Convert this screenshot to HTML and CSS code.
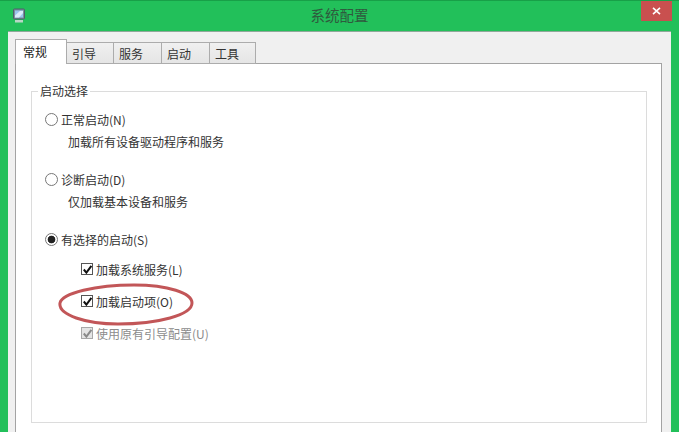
FILE: index.html
```html
<!DOCTYPE html>
<html lang="zh">
<head>
<meta charset="utf-8">
<title>系统配置</title>
<link rel="stylesheet" href="styles.css">
</head>
<body>
<div class="window">
  <header class="titlebar">
    <svg class="app-icon" width="15" height="16" viewBox="0 0 15 16">
      <rect x="1.500" y="1" width="11" height="10" rx="1" fill="#7d8f9c" stroke="#4d5f6b"/>
      <rect x="3" y="2.500" width="8" height="7" fill="#9cc4ee"/>
      <path d="M3 7.500 8 3h3v2L7 9.500H3z" fill="#dcecfb"/>
      <rect x="3" y="12" width="8" height="2.500" fill="#b9d6c6"/>
    </svg>
    <div class="title">系统配置</div>
    <button class="close" type="button" aria-label="关闭">
      <svg width="9" height="8" viewBox="0 0 9 8"><path d="M1 .8 8 7.200M8 .8 1 7.200" stroke="#fff" stroke-width="1.600"/></svg>
    </button>
  </header>
  <div class="client">
    <nav class="tabs">
      <div class="tab active w51">常规</div>
      <div class="tab w47">引导</div>
      <div class="tab w48">服务</div>
      <div class="tab w48">启动</div>
      <div class="tab w46">工具</div>
    </nav>
    <main class="pane">
      <fieldset class="group">
        <legend class="legend">启动选择</legend>
        <div class="group-body">
          <label class="row radio-row first"><span class="radio"></span>正常启动(N)</label>
          <p class="desc">加载所有设备驱动程序和服务</p>
          <label class="row radio-row gap"><span class="radio"></span>诊断启动(D)</label>
          <p class="desc">仅加载基本设备和服务</p>
          <label class="row radio-row gap"><span class="radio on"></span>有选择的启动(S)</label>
          <label class="row check-row sub1">
            <span class="check"><svg width="11" height="11" viewBox="0 0 11 11"><path d="M1.800 5.500 4.400 8.600 9.400 1.800" fill="none" stroke="#111" stroke-width="2"/></svg></span>加载系统服务(L)
          </label>
          <label class="row check-row sub2">
            <span class="check"><svg width="11" height="11" viewBox="0 0 11 11"><path d="M1.800 5.500 4.400 8.600 9.400 1.800" fill="none" stroke="#111" stroke-width="2"/></svg></span>加载启动项(O)
            <svg class="ring" width="136" height="44" viewBox="0 0 136 44"><path d="M2 20C4 10 38 2 76 2c34 0 58 8 58 18 0 12-34 21-74 21C28 41 0 32 2 20Z" fill="none" stroke="#c25658" stroke-width="3"/></svg>
          </label>
          <label class="row check-row sub2 disabled">
            <span class="check"><svg width="11" height="11" viewBox="0 0 11 11"><path d="M1.800 5.500 4.400 8.600 9.400 1.800" fill="none" stroke="#8a8a8a" stroke-width="2"/></svg></span>使用原有引导配置(U)
          </label>
        </div>
      </fieldset>
    </main>
  </div>
</div>
</body>
</html>
```

FILE: styles.css
```css
* { box-sizing: border-box; }
html, body { margin: 0; padding: 0; }
body {
  width: 679px;
  height: 432px;
  overflow: hidden;
  font-family: "Noto Sans CJK SC", "Liberation Sans", sans-serif;
  font-size: 12px;
  color: #333;
}
.window {
  height: 432px;
  display: flex;
  flex-direction: column;
  background: #22c05a;
  border-top: 1px solid #18a048;
  padding: 0 8px;
  overflow: hidden;
}
.titlebar {
  flex: none;
  height: 30px;
  position: relative;
  display: flex;
  align-items: flex-start;
  justify-content: center;
}
.app-icon { position: absolute; left: 4px; top: 7px; }
.title {
  font-size: 14.500px;
  line-height: 28px;
  color: #2f5a3e;
}
.close {
  position: absolute;
  right: -1px;
  top: 0;
  width: 31px;
  height: 20px;
  padding: 0;
  border: 0;
  background: #c9504f;
  display: flex;
  align-items: center;
  justify-content: center;
}
.client {
  flex: 1;
  min-height: 0;
  background: #f0f0f0;
  border-top: 1px solid #8fa89a;
  padding: 8px 9px 0 7px;
  display: flex;
  flex-direction: column;
}
.tabs {
  flex: none;
  display: flex;
  align-items: flex-end;
  height: 24px;
  position: relative;
  z-index: 1;
  margin-bottom: -1px;
}
.tab {
  height: 22px;
  border: 1px solid #acacac;
  border-left: 0;
  background: linear-gradient(#f0f0f0, #e5e5e5);
  padding-left: 5px;
  line-height: 21px;
  color: #333;
}
.tab.w46 { width: 46px; }
.tab.w47 { width: 47px; }
.tab.w48 { width: 48px; }
.tab.w51 { width: 52px; }
.tab.active {
  height: 25px;
  background: #fff;
  border-left: 1px solid #acacac;
  border-bottom: 0;
  padding-left: 7px;
  line-height: 23px;
  color: #222;
}
.pane {
  flex: 1;
  min-height: 0;
  background: #fff;
  border: 1px solid #a3a3a3;
  border-bottom: 0;
  padding: 18px 14px 0 15px;
}
.group {
  margin: 0;
  height: 341px;
  border: 1px solid #dcdcdc;
  padding: 0;
  min-width: 0;
}
.legend {
  margin-left: 6px;
  padding: 0 2px;
  line-height: 18px;
  color: #333;
}
.group-body { padding-left: 13px; }
.row {
  display: flex;
  align-items: center;
  height: 20px;
  position: relative;
  white-space: nowrap;
  color: #333;
}
.radio-row.first { margin-top: 9px; }
.radio-row.gap { margin-top: 17px; }
.desc {
  margin: 3px 0 0 23px;
  height: 20px;
  line-height: 20px;
  color: #333;
}
.radio {
  flex: none;
  width: 13px;
  height: 13px;
  margin-right: 3px;
  border: 1px solid #777;
  border-radius: 50%;
  background: #fff;
}
.radio.on {
  background: radial-gradient(circle, #222 0 3.500px, #fff 4.200px);
}
.check-row { padding-left: 36px; }
.sub1 { margin-top: 10px; }
.sub2 { margin-top: 12px; }
.check {
  flex: none;
  width: 12px;
  height: 12px;
  margin-right: 3px;
  border: 1px solid #555;
  background: #fff;
  display: flex;
  align-items: center;
  justify-content: center;
}
.check svg { flex: none; }
.disabled { color: #8c8c8c; }
.disabled .check {
  border-color: #a8a8a8;
  background: #e4e4e4;
}
.ring {
  position: absolute;
  left: 13px;
  top: -8px;
  pointer-events: none;
}
```
